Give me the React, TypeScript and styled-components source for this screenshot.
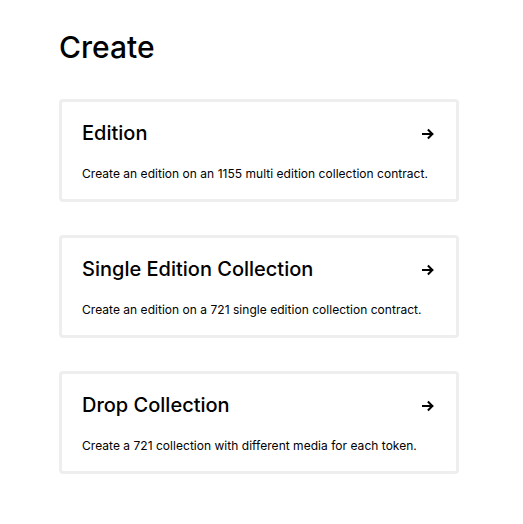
import styled, { createGlobalStyle } from "styled-components";

const GlobalStyle = createGlobalStyle`
  body {
    margin: 0;
    background: #ffffff;
    font-family: Inter, "Noto Sans", sans-serif;
    color: #000000;
  }
`;

const ScMain = styled.main`
  width: 400px;
  padding: 27px 0 40px 59px;
`;

const ScTitle = styled.h1`
  margin: 0 0 32px;
  font-size: 30px;
  line-height: 40px;
  font-weight: 500;
`;

const ScList = styled.div`
  display: flex;
  flex-direction: column;
  gap: 33px;
`;

const ScCard = styled.a`
  display: block;
  height: 103px;
  box-sizing: border-box;
  padding: 19px 22px 0 20px;
  border: 3px solid #eeeeee;
  border-radius: 4px;
  text-decoration: none;
  color: inherit;
  cursor: pointer;
`;

const ScHead = styled.div`
  display: flex;
  align-items: center;
  justify-content: space-between;
`;

const ScName = styled.h2`
  margin: 0;
  font-size: 20px;
  line-height: 24px;
  font-weight: 500;
`;

const ScArrow = styled.svg`
  display: block;
  margin-top: 1px;
`;

const ScDesc = styled.p`
  margin: 21px 0 0;
  font-size: 12px;
  line-height: 16px;
  font-weight: 400;
  letter-spacing: 0.03px;
`;

const ArrowIcon = () => (
  <ScArrow width="12" height="12" viewBox="0 0 12 12" fill="none">
    <path
      d="M1 6H10.2M6.6 2.2L10.4 6L6.6 9.8"
      stroke="#000"
      strokeWidth="2"
      strokeLinecap="square"
    />
  </ScArrow>
);

const items = [
  {
    name: "Edition",
    desc: "Create an edition on an 1155 multi edition collection contract.",
  },
  {
    name: "Single Edition Collection",
    desc: "Create an edition on a 721 single edition collection contract.",
  },
  {
    name: "Drop Collection",
    desc: "Create a 721 collection with different media for each token.",
  },
];

export default function App() {
  return (
    <>
      <GlobalStyle />
      <ScMain>
        <ScTitle>Create</ScTitle>
        <ScList>
          {items.map((item) => (
            <ScCard key={item.name}>
              <ScHead>
                <ScName>{item.name}</ScName>
                <ArrowIcon />
              </ScHead>
              <ScDesc>{item.desc}</ScDesc>
            </ScCard>
          ))}
        </ScList>
      </ScMain>
    </>
  );
}
